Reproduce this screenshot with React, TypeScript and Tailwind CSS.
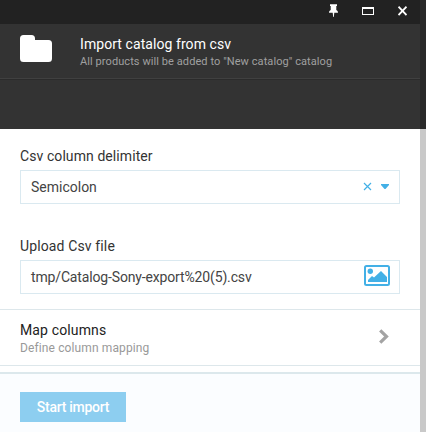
import type { ReactNode } from 'react';

function TitleBar() {
  return (
    <div className="flex h-6 shrink-0 items-start bg-[#222222] text-white">
      <svg className="ml-[328px] mt-1 h-[13px] w-[11px]" viewBox="0 0 11 13" fill="currentColor" aria-label="Pin">
        <path d="M2 .3h7v1.700H8.300V6C9.300 6.500 10 7.400 10 8.800H6.300L5.800 13h-.6L4.700 8.800H1C1 7.400 1.700 6.500 2.700 6V2H2z" />
      </svg>
      <div className="ml-[23px] mt-[7px] h-2 w-3 border border-t-2 border-white" />
      <svg className="ml-6 mt-[6px] h-[10px] w-[9px]" viewBox="0 0 9 10" fill="none" stroke="currentColor" strokeWidth="1.8" aria-label="Close">
        <path d="M.5.7l8 8.400M8.500.7l-8 8.400" />
      </svg>
    </div>
  );
}

function Field({ label, value, valueClass, labelClass, children }: { label: string; value: string; valueClass: string; labelClass: string; children: ReactNode }) {
  return (
    <div className="px-5">
      <div className={`flex h-[22px] items-start whitespace-nowrap text-sm leading-4 text-[#333333] ${labelClass}`}>
        <span>{label}</span>
      </div>
      <div className="flex h-[34px] w-[380px] items-center justify-between border border-[#dae9f0] pl-[10px] pr-[9px]">
        <span className={`whitespace-nowrap text-sm leading-4 text-[#444444] ${valueClass}`}>{value}</span>
        {children}
      </div>
    </div>
  );
}

export default function App() {
  return (
    <div className="flex h-[432px] w-[426px] overflow-hidden bg-white font-['Roboto','Noto_Sans',sans-serif]">
      <div className="flex w-[420px] flex-col">
        <TitleBar />
        <header className="h-[105px] shrink-0 bg-[#333333]">
          <div className="flex h-14 border-b border-[#2b2b2b]">
            <div className="flex w-full border-b border-[#404040]">
              <svg className="ml-5 mt-[11px] h-[27px] w-8 shrink-0 text-white" viewBox="0 0 32 27" fill="currentColor" aria-label="Folder">
                <path d="M0 3.500A3.500 3.500 0 0 1 3.500 0h8A3.500 3.500 0 0 1 15 3.500V5h13.500A3.500 3.500 0 0 1 32 8.500v15a3.500 3.500 0 0 1-3.500 3.500h-25A3.500 3.500 0 0 1 0 23.500z" />
              </svg>
              <div className="ml-7 mt-3 whitespace-nowrap">
                <h1 className="text-sm leading-4 tracking-[0.07px] text-white">Import catalog from csv</h1>
                <p className="mt-[3px] text-[11px] leading-[14px] tracking-[0.08px] text-[#a0a0a0]">All products will be added to "New catalog" catalog</p>
              </div>
            </div>
          </div>
        </header>
        <main className="flex h-[243px] shrink-0 flex-col pt-[19px]">
          <Field label="Csv column delimiter" value="Semicolon" labelClass="tracking-[0.08px]" valueClass="-mt-px">
            <div className="-mt-px flex items-center gap-[9px] text-[#43b0e6]">
              <svg className="h-[9px] w-[9px]" viewBox="0 0 9 9" fill="none" stroke="currentColor" strokeWidth="1.2" aria-label="Clear">
                <path d="M1 1l7 7M8 1L1 8" />
              </svg>
              <svg className="mr-px h-[5px] w-2" viewBox="0 0 8 5" fill="currentColor" aria-label="Open">
                <path d="M0 0h8v1L4.500 5h-1L0 1z" />
              </svg>
            </div>
          </Field>
          <div className="h-[34px]" />
          <Field label="Upload Csv file" value="tmp/Catalog-Sony-export%20(5).csv" labelClass="tracking-[0.13px]" valueClass="tracking-[-0.15px]">
            <svg className="-mt-[3px] h-[21px] w-[26px] text-[#43b0e6]" viewBox="0 0 26 21" aria-label="Image">
              <rect x="1" y="1" width="24" height="19" rx="1.500" fill="none" stroke="currentColor" strokeWidth="2" />
              <circle cx="6.300" cy="6.300" r="2.700" fill="currentColor" />
              <path d="M4 17v-2l4-4 2 1.500L17 6l6 6v5z" fill="currentColor" />
            </svg>
          </Field>
          <div className="mt-[15px] flex h-[57px] justify-between border-y border-[#dde7eb] pl-5 pr-[31px]">
            <div className="whitespace-nowrap pt-[12px]">
              <h2 className="text-sm leading-4 tracking-[0.13px] text-[#222222]">Map columns</h2>
              <p className="mt-[2px] text-xs leading-4 tracking-[0.12px] text-[#999999]">Define column mapping</p>
            </div>
            <svg className="mt-[19px] h-[15px] w-[10px]" viewBox="0 0 10 15" fill="none" stroke="#a3a3a3" strokeWidth="3.200" aria-label="Next">
              <path d="M1.200 1.300L7.500 7.500l-6.300 6.200" />
            </svg>
          </div>
        </main>
        <footer className="h-[60px] shrink-0 border-t-2 border-[#dce8ec] bg-[#fbfdff] px-5 pt-[18px]">
          <button className="flex h-[30px] w-[106px] items-center justify-center whitespace-nowrap bg-[#8dcef0] text-sm font-medium leading-4 tracking-[-0.28px] text-white">
            Start import
          </button>
        </footer>
      </div>
      <div className="flex w-[6px] flex-col">
        <div className="h-[129px] bg-[#292929]" />
        <div className="flex-1 bg-[#c9c9c9]" />
      </div>
    </div>
  );
}
